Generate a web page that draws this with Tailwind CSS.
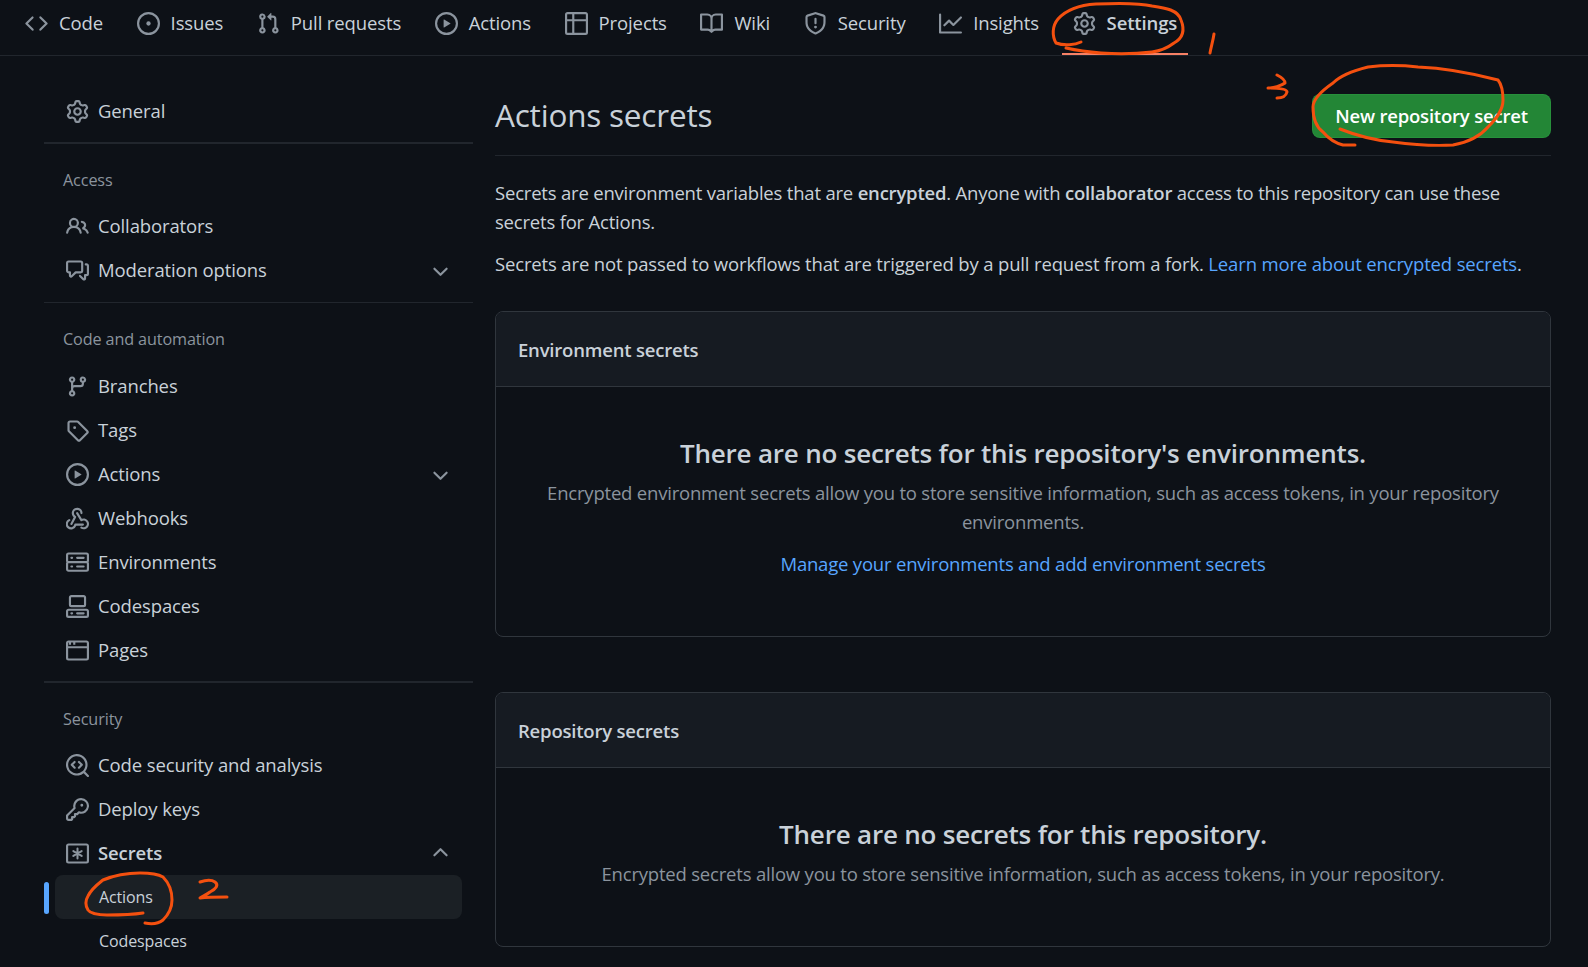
<!DOCTYPE html>
<html lang="en">
<head>
  <meta charset="UTF-8">
  <title>Actions secrets</title>
  <script src="https://cdn.jsdelivr.net/npm/@tailwindcss/browser@4"></script>
</head>
<body class="relative w-[1588px] h-[967px] overflow-hidden bg-[#0d1117] text-[#c9d1d9] text-[18.5px] tracking-[-0.12px] font-['Open_Sans',sans-serif]">

  <!-- icons -->
  <svg class="hidden">
    <symbol id="code" viewBox="0 0 16 16"><path d="M4.72 3.22a.75.75 0 011.06 1.06L2.06 8l3.72 3.72a.75.75 0 11-1.06 1.06L.47 8.53a.75.75 0 010-1.06l4.25-4.25zm6.56 0a.75.75 0 10-1.06 1.06L13.94 8l-3.72 3.72a.75.75 0 101.06 1.06l4.25-4.25a.75.75 0 000-1.06l-4.25-4.25z"/></symbol>
    <symbol id="issue" viewBox="0 0 16 16"><path d="M8 9.5a1.5 1.5 0 100-3 1.5 1.5 0 000 3z"/><path fill-rule="evenodd" d="M8 0a8 8 0 100 16A8 8 0 008 0zM1.5 8a6.5 6.5 0 1113 0 6.5 6.5 0 01-13 0z"/></symbol>
    <symbol id="pull" viewBox="0 0 16 16"><path fill-rule="evenodd" d="M7.177 3.073L9.573.677A.25.25 0 0110 .854v4.792a.25.25 0 01-.427.177L7.177 3.427a.25.25 0 010-.354zM3.75 2.5a.75.75 0 100 1.5.75.75 0 000-1.5zm-2.25.75a2.25 2.25 0 113 2.122v5.256a2.251 2.251 0 11-1.5 0V5.372A2.25 2.25 0 011.5 3.25zM11 2.5h-1V4h1a1 1 0 011 1v5.628a2.251 2.251 0 101.5 0V5A2.5 2.5 0 0011 2.5zm1 10.25a.75.75 0 111.5 0 .75.75 0 01-1.5 0zM3.75 12a.75.75 0 100 1.5.75.75 0 000-1.5z"/></symbol>
    <symbol id="play" viewBox="0 0 16 16"><path fill-rule="evenodd" d="M1.5 8a6.5 6.5 0 1113 0 6.5 6.5 0 01-13 0zM8 0a8 8 0 100 16A8 8 0 008 0zM6.379 5.227A.25.25 0 006 5.442v5.117a.25.25 0 00.379.214l4.264-2.559a.25.25 0 000-.428L6.379 5.227z"/></symbol>
    <symbol id="table" viewBox="0 0 16 16"><path fill-rule="evenodd" d="M0 1.75C0 .784.784 0 1.75 0h12.5C15.216 0 16 .784 16 1.75v12.5A1.75 1.75 0 0114.25 16H1.75A1.75 1.75 0 010 14.25V1.75zM1.5 6.5v7.75c0 .138.112.25.25.25H5v-8H1.5zM5 5H1.5V1.75a.25.25 0 01.25-.25H5V5zm1.5 1.5v8h7.75a.25.25 0 00.25-.25V6.5h-8zm8-1.5h-8V1.5h7.75a.25.25 0 01.25.25V5z"/></symbol>
    <symbol id="book" viewBox="0 0 16 16"><path fill-rule="evenodd" d="M0 1.75A.75.75 0 01.75 1h4.253c1.227 0 2.317.59 3 1.501A3.744 3.744 0 0111.006 1h4.245a.75.75 0 01.75.75v10.5a.75.75 0 01-.75.75h-4.507a2.25 2.25 0 00-1.591.659l-.622.621a.75.75 0 01-1.06 0l-.622-.621A2.25 2.25 0 005.258 13H.75a.75.75 0 01-.75-.75V1.75zm8.755 3a2.25 2.25 0 012.25-2.25H14.5v9h-3.757c-.71 0-1.4.201-1.992.572l.004-7.322zm-1.504 7.324l.004-5.073-.002-2.253A2.25 2.25 0 005.003 2.5H1.5v9h3.757a3.75 3.75 0 011.994.574z"/></symbol>
    <symbol id="shield" viewBox="0 0 16 16"><path fill-rule="evenodd" d="M7.467.133a1.75 1.75 0 011.066 0l5.25 1.68A1.75 1.75 0 0115 3.48V7c0 1.566-.32 3.182-1.303 4.682-.983 1.498-2.585 2.813-5.032 3.855a1.7 1.7 0 01-1.33 0c-2.447-1.042-4.049-2.357-5.032-3.855C1.32 10.182 1 8.566 1 7V3.48a1.75 1.75 0 011.217-1.667l5.25-1.68zm.61 1.429a.25.25 0 00-.153 0l-5.25 1.68a.25.25 0 00-.174.238V7c0 1.358.275 2.666 1.057 3.86.784 1.194 2.121 2.34 4.366 3.297a.2.2 0 00.154 0c2.245-.956 3.582-2.104 4.366-3.298C13.225 9.666 13.5 8.36 13.5 7V3.48a.25.25 0 00-.174-.237l-5.25-1.68zM9 10.5a1 1 0 11-2 0 1 1 0 012 0zm-.25-5.75a.75.75 0 10-1.5 0v3a.75.75 0 001.5 0v-3z"/></symbol>
    <symbol id="graph" viewBox="0 0 16 16"><path fill-rule="evenodd" d="M1.5 1.75a.75.75 0 00-1.5 0v12.5c0 .414.336.75.75.75h14.5a.75.75 0 000-1.5H1.5V1.75zm14.28 2.53a.75.75 0 00-1.06-1.06L10 7.94 7.53 5.47a.75.75 0 00-1.06 0L3.22 8.72a.75.75 0 001.06 1.06L7 7.06l2.47 2.47a.75.75 0 001.06 0l5.25-5.25z"/></symbol>
    <symbol id="gear" viewBox="0 0 16 16"><path fill-rule="evenodd" d="M7.429 1.525a6.593 6.593 0 011.142 0c.036.003.108.036.137.146l.289 1.105c.147.56.55.967.997 1.189.174.086.341.183.501.29.417.278.97.423 1.53.27l1.102-.303c.11-.03.175.016.195.046.219.31.41.641.573.989.014.031.022.11-.059.19l-.815.806c-.411.406-.562.957-.53 1.456a4.588 4.588 0 010 .582c-.032.499.119 1.05.53 1.456l.815.806c.08.08.073.159.059.19a6.494 6.494 0 01-.573.99c-.02.029-.086.074-.195.045l-1.103-.303c-.559-.153-1.112-.008-1.529.27-.16.107-.327.204-.5.29-.449.222-.851.628-.998 1.189l-.289 1.105c-.029.11-.101.143-.137.146a6.613 6.613 0 01-1.142 0c-.036-.003-.108-.037-.137-.146l-.289-1.105c-.147-.56-.55-.967-.997-1.189a4.502 4.502 0 01-.501-.29c-.417-.278-.97-.423-1.53-.27l-1.102.303c-.11.03-.175-.016-.195-.046a6.492 6.492 0 01-.573-.989c-.014-.031-.022-.11.059-.19l.815-.806c.411-.406.562-.957.53-1.456a4.587 4.587 0 010-.582c.032-.499-.119-1.05-.53-1.456l-.815-.806c-.08-.08-.073-.159-.059-.19a6.44 6.44 0 01.573-.99c.02-.029.086-.075.195-.045l1.103.303c.559.153 1.112.008 1.529-.27.16-.107.327-.204.5-.29.449-.222.851-.628.998-1.189l.289-1.105c.029-.11.101-.143.137-.146zM8 0c-.236 0-.47.01-.701.03-.743.065-1.29.615-1.458 1.261l-.29 1.106c-.017.066-.078.158-.211.224a5.994 5.994 0 00-.668.386c-.123.082-.233.09-.3.071L3.27 2.776c-.644-.177-1.392.02-1.82.63a7.977 7.977 0 00-.704 1.217c-.315.675-.111 1.422.363 1.891l.815.806c.05.048.098.147.088.294a6.084 6.084 0 000 .772c.01.147-.038.246-.088.294l-.815.806c-.474.469-.678 1.216-.363 1.891.2.428.436.835.704 1.218.428.609 1.176.806 1.82.63l1.103-.303c.066-.019.176-.011.299.071.213.143.436.272.668.386.133.066.194.158.212.224l.289 1.106c.169.646.715 1.196 1.458 1.26a8.094 8.094 0 001.402 0c.743-.064 1.29-.614 1.458-1.26l.29-1.106c.017-.066.078-.158.211-.224a5.98 5.98 0 00.668-.386c.123-.082.233-.09.3-.071l1.102.302c.644.177 1.392-.02 1.82-.63.268-.382.505-.789.704-1.217.315-.675.111-1.422-.364-1.891l-.814-.806c-.05-.048-.098-.147-.088-.294a6.1 6.1 0 000-.772c-.01-.147.039-.246.088-.294l.814-.806c.475-.469.679-1.216.364-1.891a7.992 7.992 0 00-.704-1.218c-.428-.609-1.176-.806-1.82-.63l-1.103.303c-.066.019-.176.011-.299-.071a5.991 5.991 0 00-.668-.386c-.133-.066-.194-.158-.212-.224L10.16 1.29C9.99.645 9.444.095 8.701.031A8.094 8.094 0 008 0zm1.5 8a1.5 1.5 0 11-3 0 1.5 1.5 0 013 0zM11 8a3 3 0 11-6 0 3 3 0 016 0z"/></symbol>
    <symbol id="people" viewBox="0 0 16 16"><path fill-rule="evenodd" d="M5.5 3.5a2 2 0 100 4 2 2 0 000-4zM2 5.5a3.5 3.5 0 115.898 2.549 5.507 5.507 0 013.034 4.084.75.75 0 11-1.482.235 4.001 4.001 0 00-7.9 0 .75.75 0 01-1.482-.236A5.507 5.507 0 013.102 8.05 3.49 3.49 0 012 5.5zM11 4a.75.75 0 100 1.5 1.5 1.5 0 01.666 2.844.75.75 0 00-.416.672v.352a.75.75 0 00.574.73c1.2.289 2.162 1.2 2.522 2.372a.75.75 0 101.434-.44 5.01 5.01 0 00-2.56-3.012A3 3 0 0011 4z"/></symbol>
    <symbol id="discussion" viewBox="0 0 16 16"><path fill-rule="evenodd" d="M1.5 2.75a.25.25 0 01.25-.25h8.5a.25.25 0 01.25.25v5.5a.25.25 0 01-.25.25h-3.5a.75.75 0 00-.53.22L3.5 11.44V9.25a.75.75 0 00-.75-.75h-1a.25.25 0 01-.25-.25v-5.5zM1.75 1A1.75 1.75 0 000 2.75v5.5C0 9.216.784 10 1.75 10H2v1.543a1.457 1.457 0 002.487 1.03L7.061 10h3.189A1.75 1.75 0 0012 8.25v-5.5A1.75 1.75 0 0010.25 1h-8.5zM14.5 4.75a.25.25 0 00-.25-.25h-.5a.75.75 0 110-1.5h.5c.966 0 1.75.784 1.75 1.75v5.5A1.75 1.75 0 0114.25 12H14v1.543a1.457 1.457 0 01-2.487 1.03L9.22 12.28a.75.75 0 111.06-1.06l2.22 2.22v-2.19a.75.75 0 01.75-.75h1a.25.25 0 00.25-.25v-5.5z"/></symbol>
    <symbol id="branch" viewBox="0 0 16 16"><path fill-rule="evenodd" d="M11.75 2.5a.75.75 0 100 1.5.75.75 0 000-1.5zm-2.25.75a2.25 2.25 0 113 2.122V6A2.5 2.5 0 0110 8.5H6a1 1 0 00-1 1v1.128a2.251 2.251 0 11-1.5 0V5.372a2.25 2.25 0 111.5 0v1.836A2.492 2.492 0 016 7h4a1 1 0 001-1v-.628A2.25 2.25 0 019.5 3.25zM4.25 12a.75.75 0 100 1.5.75.75 0 000-1.5zM3.5 3.25a.75.75 0 111.5 0 .75.75 0 01-1.5 0z"/></symbol>
    <symbol id="tag" viewBox="0 0 16 16"><path fill-rule="evenodd" d="M2.5 7.775V2.75a.25.25 0 01.25-.25h5.025a.25.25 0 01.177.073l6.25 6.25a.25.25 0 010 .354l-5.025 5.025a.25.25 0 01-.354 0l-6.25-6.25a.25.25 0 01-.073-.177zm-1.5 0V2.75C1 1.784 1.784 1 2.75 1h5.025c.464 0 .91.184 1.238.513l6.25 6.25a1.75 1.75 0 010 2.474l-5.026 5.026a1.75 1.75 0 01-2.474 0l-6.25-6.25A1.75 1.75 0 011 7.775zM6 5a1 1 0 100 2 1 1 0 000-2z"/></symbol>
    <symbol id="webhook" viewBox="0 0 16 16"><path d="M5.5 4.25a2.25 2.25 0 014.5 0 .75.75 0 001.5 0 3.75 3.75 0 10-6.14 2.889l-2.272 4.258a.75.75 0 001.324.706L7 7.25a.75.75 0 00-.309-1.015A2.25 2.25 0 015.5 4.25z"/><path d="M7.364 3.607a.75.75 0 011.03.257l2.608 4.349a3.75 3.75 0 11-.628 6.785.75.75 0 01.752-1.299 2.25 2.25 0 10-.033-3.88.75.75 0 01-1.03-.256L7.107 4.636a.75.75 0 01.257-1.03z"/><path d="M2.9 8.776A.75.75 0 012.625 9.8 2.25 2.25 0 105.75 12.25a.75.75 0 01.75-.75h5.25a.75.75 0 010 1.5H7.125A3.751 3.751 0 111.875 8.5a.75.75 0 011.025.276z"/></symbol>
    <symbol id="server" viewBox="0 0 16 16"><path fill-rule="evenodd" d="M1.75 1A1.75 1.75 0 000 2.75v4c0 .372.116.717.314 1a1.742 1.742 0 00-.314 1v4c0 .966.784 1.75 1.75 1.75h12.5A1.75 1.75 0 0016 12.75v-4c0-.372-.116-.717-.314-1 .198-.283.314-.628.314-1v-4A1.75 1.75 0 0014.25 1H1.75zm0 7.5a.25.25 0 00-.25.25v4c0 .138.112.25.25.25h12.5a.25.25 0 00.25-.25v-4a.25.25 0 00-.25-.25H1.75zM1.5 2.75a.25.25 0 01.25-.25h12.5a.25.25 0 01.25.25v4a.25.25 0 01-.25.25H1.75a.25.25 0 01-.25-.25v-4zm5.5 2A.75.75 0 017.75 4h4.5a.75.75 0 010 1.5h-4.5A.75.75 0 017 4.75zM7.75 10a.75.75 0 000 1.5h4.5a.75.75 0 000-1.5h-4.5zM3 4.75A.75.75 0 013.75 4h.5a.75.75 0 010 1.5h-.5A.75.75 0 013 4.75zM3.75 10a.75.75 0 000 1.5h.5a.75.75 0 000-1.5h-.5z"/></symbol>
    <symbol id="codespaces" viewBox="0 0 16 16"><path fill-rule="evenodd" d="M2 1.75C2 .784 2.784 0 3.75 0h8.5C13.216 0 14 .784 14 1.75v5a1.75 1.75 0 01-1.75 1.75h-8.5A1.75 1.75 0 012 6.75v-5zm1.75-.25a.25.25 0 00-.25.25v5c0 .138.112.25.25.25h8.5a.25.25 0 00.25-.25v-5a.25.25 0 00-.25-.25h-8.5zM0 11.25c0-.966.784-1.75 1.75-1.75h12.5c.966 0 1.75.784 1.75 1.75v3A1.75 1.75 0 0114.25 16H1.75A1.75 1.75 0 010 14.25v-3zM1.75 11a.25.25 0 00-.25.25v3c0 .138.112.25.25.25h12.5a.25.25 0 00.25-.25v-3a.25.25 0 00-.25-.25H1.75zM7 12.75a.75.75 0 01.75-.75h4.5a.75.75 0 010 1.5h-4.5a.75.75 0 01-.75-.75zm-4 0a.75.75 0 01.75-.75h.5a.75.75 0 010 1.5h-.5a.75.75 0 01-.75-.75z"/></symbol>
    <symbol id="browser" viewBox="0 0 16 16"><path fill-rule="evenodd" d="M0 2.75C0 1.784.784 1 1.75 1h12.5c.966 0 1.75.784 1.75 1.75v10.5A1.75 1.75 0 0114.25 15H1.75A1.75 1.75 0 010 13.25V2.75zM1.5 6.5v6.75c0 .138.112.25.25.25h12.5a.25.25 0 00.25-.25V6.5h-13zM1.5 5h13V2.75a.25.25 0 00-.25-.25H6.5V4H5V2.5H3.5V4H2V2.5h-.25a.25.25 0 00-.25.25V5z"/></symbol>
    <symbol id="codescan" viewBox="0 0 16 16"><path d="M8.47 4.97a.75.75 0 000 1.06L9.94 7.5 8.47 8.97a.75.75 0 101.06 1.06l2-2a.75.75 0 000-1.06l-2-2a.75.75 0 00-1.06 0zM6.53 6.03a.75.75 0 00-1.06-1.06l-2 2a.75.75 0 000 1.06l2 2a.75.75 0 101.06-1.06L5.06 7.5l1.47-1.47z"/><path fill-rule="evenodd" d="M12.246 13.307a7.5 7.5 0 111.06-1.06l2.474 2.473a.75.75 0 11-1.06 1.06l-2.474-2.473zM1.5 7.5a6 6 0 1110.386 4.094.75.75 0 00-.292.293A6 6 0 011.5 7.5z"/></symbol>
    <symbol id="key" viewBox="0 0 16 16"><path fill-rule="evenodd" d="M6.5 5.5a4 4 0 112.731 3.795.75.75 0 00-.768.18L7.44 10.5H6.25a.75.75 0 00-.75.75v1.19l-.06.06H4.25a.75.75 0 00-.75.75v1.19l-.06.06H1.75a.25.25 0 01-.25-.25v-1.69l5.024-5.023a.75.75 0 00.181-.768A3.995 3.995 0 016.5 5.5zm4-5.5a5.5 5.5 0 00-5.348 6.788L.22 11.72a.75.75 0 00-.22.53v2C0 15.216.784 16 1.75 16h2a.75.75 0 00.53-.22l.5-.5a.75.75 0 00.22-.53V14h.75a.75.75 0 00.53-.22l.5-.5a.75.75 0 00.22-.53V12h.75a.75.75 0 00.53-.22l.932-.932A5.5 5.5 0 1010.5 0zm.5 6a1 1 0 100-2 1 1 0 000 2z"/></symbol>
    <symbol id="asterisk" viewBox="0 0 16 16"><path fill-rule="evenodd" d="M0 2.75C0 1.784.784 1 1.75 1h12.5c.966 0 1.75.784 1.75 1.75v10.5A1.75 1.75 0 0114.25 15H1.75A1.75 1.75 0 010 13.25V2.75zM1.75 2.5a.25.25 0 00-.25.25v10.5c0 .138.112.25.25.25h12.5a.25.25 0 00.25-.25V2.75a.25.25 0 00-.25-.25H1.75z"/><path d="M8 4.6v6.8M5.1 6.3l5.8 3.4M10.9 6.3l-5.8 3.4" fill="none" stroke="currentColor" stroke-width="1.4" stroke-linecap="round"/></symbol>
    <symbol id="chevron" viewBox="0 0 16 16"><path fill-rule="evenodd" d="M12.78 6.22a.75.75 0 010 1.06l-4.25 4.25a.75.75 0 01-1.06 0L3.22 7.28a.75.75 0 011.06-1.06L8 9.94l3.72-3.72a.75.75 0 011.06 0z"/></symbol>
  </svg>

  <!-- repo tabs -->
  <nav class="flex h-[56px] items-start gap-[11.6px] border-b border-[#21262d] pl-[14px]">
    <a class="flex h-[46px] items-center gap-[11px] px-[11px]"><svg class="size-[23px] fill-current text-[#8b949e]"><use href="#code"/></svg>Code</a>
    <a class="flex h-[46px] items-center gap-[11px] px-[11px]"><svg class="size-[23px] fill-current text-[#8b949e]"><use href="#issue"/></svg>Issues</a>
    <a class="flex h-[46px] items-center gap-[11px] px-[11px]"><svg class="size-[23px] fill-current text-[#8b949e]"><use href="#pull"/></svg>Pull requests</a>
    <a class="flex h-[46px] items-center gap-[11px] px-[11px]"><svg class="size-[23px] fill-current text-[#8b949e]"><use href="#play"/></svg>Actions</a>
    <a class="flex h-[46px] items-center gap-[11px] px-[11px]"><svg class="size-[23px] fill-current text-[#8b949e]"><use href="#table"/></svg>Projects</a>
    <a class="flex h-[46px] items-center gap-[11px] px-[11px]"><svg class="size-[23px] fill-current text-[#8b949e]"><use href="#book"/></svg>Wiki</a>
    <a class="flex h-[46px] items-center gap-[11px] px-[11px]"><svg class="size-[23px] fill-current text-[#8b949e]"><use href="#shield"/></svg>Security</a>
    <a class="flex h-[46px] items-center gap-[11px] px-[11px]"><svg class="size-[23px] fill-current text-[#8b949e]"><use href="#graph"/></svg>Insights</a>
    <a class="relative flex h-[46px] items-center gap-[11px] px-[11px] font-semibold after:absolute after:left-0 after:right-0 after:top-[53px] after:h-[2px] after:bg-[#f78166]"><svg class="size-[23px] fill-current text-[#8b949e]"><use href="#gear"/></svg>Settings</a>
  </nav>

  <div class="flex pl-[44px] pr-[37px]">
    <!-- sidebar -->
    <aside class="w-[429px] shrink-0 pt-[33px]">
      <a class="flex h-[44px] items-center gap-[9px] pl-[22px]"><svg class="size-[23px] fill-current text-[#8b949e]"><use href="#gear"/></svg>General</a>

      <div class="mt-[9px] border-t-2 border-[#21262d]"></div>
      <h3 class="mt-[14px] flex h-[44px] items-center pl-[19px] text-[16.2px] font-medium text-[#8b949e]">Access</h3>
      <a class="mt-[2px] flex h-[44px] items-center gap-[9px] pl-[22px]"><svg class="size-[23px] fill-current text-[#8b949e]"><use href="#people"/></svg>Collaborators</a>
      <a class="flex h-[44px] items-center gap-[9px] pl-[22px]"><svg class="size-[23px] fill-current text-[#8b949e]"><use href="#discussion"/></svg>Moderation options<svg class="ml-auto mr-[21px] size-[23px] fill-current text-[#8b949e]"><use href="#chevron"/></svg></a>

      <div class="mt-[10px] border-t border-[#21262d]"></div>
      <h3 class="mt-[14px] flex h-[44px] items-center pl-[19px] text-[16.2px] font-medium text-[#8b949e]">Code and automation</h3>
      <a class="mt-[3px] flex h-[44px] items-center gap-[9px] pl-[22px]"><svg class="size-[23px] fill-current text-[#8b949e]"><use href="#branch"/></svg>Branches</a>
      <a class="flex h-[44px] items-center gap-[9px] pl-[22px]"><svg class="size-[23px] fill-current text-[#8b949e]"><use href="#tag"/></svg>Tags</a>
      <a class="flex h-[44px] items-center gap-[9px] pl-[22px]"><svg class="size-[23px] fill-current text-[#8b949e]"><use href="#play"/></svg>Actions<svg class="ml-auto mr-[21px] size-[23px] fill-current text-[#8b949e]"><use href="#chevron"/></svg></a>
      <a class="flex h-[44px] items-center gap-[9px] pl-[22px]"><svg class="size-[23px] fill-current text-[#8b949e]"><use href="#webhook"/></svg>Webhooks</a>
      <a class="flex h-[44px] items-center gap-[9px] pl-[22px]"><svg class="size-[23px] fill-current text-[#8b949e]"><use href="#server"/></svg>Environments</a>
      <a class="flex h-[44px] items-center gap-[9px] pl-[22px]"><svg class="size-[23px] fill-current text-[#8b949e]"><use href="#codespaces"/></svg>Codespaces</a>
      <a class="flex h-[44px] items-center gap-[9px] pl-[22px]"><svg class="size-[23px] fill-current text-[#8b949e]"><use href="#browser"/></svg>Pages</a>

      <div class="mt-[9px] border-t-2 border-[#21262d]"></div>
      <h3 class="mt-[14px] flex h-[44px] items-center pl-[19px] text-[16.2px] font-medium text-[#8b949e]">Security</h3>
      <a class="mt-[2px] flex h-[44px] items-center gap-[9px] pl-[22px]"><svg class="size-[23px] fill-current text-[#8b949e]"><use href="#codescan"/></svg>Code security and analysis</a>
      <a class="flex h-[44px] items-center gap-[9px] pl-[22px]"><svg class="size-[23px] fill-current text-[#8b949e]"><use href="#key"/></svg>Deploy keys</a>
      <a class="flex h-[44px] items-center gap-[9px] pl-[22px] font-semibold"><svg class="size-[23px] fill-current text-[#8b949e]"><use href="#asterisk"/></svg>Secrets<svg class="ml-auto mr-[21px] size-[23px] rotate-180 fill-current text-[#8b949e]"><use href="#chevron"/></svg></a>
      <div class="relative ml-[11px] mr-[11px] flex h-[44px] items-center rounded-lg bg-[#1b2025] pl-[44px] text-[16px]">
        <span class="absolute left-[-11px] top-[7px] h-[32px] w-[5px] rounded-full bg-[#58a6ff]"></span>
        Actions
      </div>
      <a class="flex h-[44px] items-center pl-[55px] text-[16px]">Codespaces</a>
    </aside>

    <!-- main -->
    <main class="ml-[22px] min-w-0 flex-1 pt-[38px] tracking-[-0.2px]">
      <div class="flex h-[62px] items-start justify-between border-b border-[#21262d]">
        <h2 class="text-[31.5px] font-normal leading-[42px] text-[#c9d1d9]">Actions secrets</h2>
        <button class="flex h-[44px] w-[239px] items-center justify-center rounded-lg border border-[#2ea043]/40 bg-[#238636] font-semibold text-white">New repository secret</button>
      </div>

      <p class="mt-[22px] leading-[29px]">Secrets are environment variables that are <b class="font-semibold">encrypted</b>. Anyone with <b class="font-semibold">collaborator</b> access to this repository can use these<br>secrets for Actions.</p>
      <p class="mt-[13px] leading-[29px] tracking-[-0.15px]">Secrets are not passed to workflows that are triggered by a pull request from a fork. <a class="text-[#58a6ff]">Learn more about encrypted secrets</a>.</p>

      <section class="mt-[33px] overflow-hidden rounded-lg border border-[#30363d]">
        <h3 class="flex h-[75px] items-center border-b border-[#30363d] bg-[#161b22] pl-[22px] pt-[2px] font-semibold">Environment secrets</h3>
        <div class="pb-[58px] pt-[46px] text-center">
          <h4 class="text-[26px] font-semibold leading-[40px]">There are no secrets for this repository's environments.</h4>
          <p class="mt-[5px] leading-[29px] text-[#8b949e]">Encrypted environment secrets allow you to store sensitive information, such as access tokens, in your repository<br>environments.</p>
          <a class="mt-[13px] block leading-[29px] text-[#58a6ff]">Manage your environments and add environment secrets</a>
        </div>
      </section>

      <section class="mt-[55px] overflow-hidden rounded-lg border border-[#30363d]">
        <h3 class="flex h-[75px] items-center border-b border-[#30363d] bg-[#161b22] pl-[22px] pt-[2px] font-semibold">Repository secrets</h3>
        <div class="pb-[58px] pt-[46px] text-center">
          <h4 class="text-[26px] font-semibold leading-[40px]">There are no secrets for this repository.</h4>
          <p class="mt-[5px] leading-[29px] text-[#8b949e]">Encrypted secrets allow you to store sensitive information, such as access tokens, in your repository.</p>
        </div>
      </section>
    </main>
  </div>

  <!-- hand drawn marks on top of the screenshot -->
  <svg class="pointer-events-none absolute left-0 top-0 h-[967px] w-[1588px]" viewBox="0 0 1588 967" fill="none" stroke="#f4500f" stroke-width="3" stroke-linecap="round" stroke-linejoin="round">
    <path d="M1081 42C1075 45 1064 46 1056 43C1052 36 1052 26 1058 19C1066 10 1080 5 1096 4C1120 3 1140 3 1152 6C1166 8 1178 10 1181 20C1185 30 1183 38 1174 43C1166 49 1160 51 1152 52C1135 54 1115 54 1101 53C1088 52 1075 50 1066 48"/>
    <path d="M1214 34C1213 41 1211 47 1210 53"/>
    <path d="M1277 75C1281 77 1285 80 1285 83C1281 86 1273 88 1268 88C1274 88 1287 88 1287 92C1286 96 1282 98 1277 98"/>
    <path d="M1340 129C1355 135 1372 140 1393 142C1415 145 1435 146 1453 145C1470 142 1482 134 1488 127C1497 118 1503 110 1503 100C1503 92 1502 85 1498 80C1475 74 1445 68 1418 67C1400 65 1385 65 1368 67C1352 71 1340 76 1333 83C1320 92 1313 100 1313 107C1313 118 1316 127 1323 132C1328 138 1335 143 1343 145L1355 145"/>
    <path d="M200 882C206 880 212 880 215 882C219 885 216 889 210 892C206 895 203 896 200 898C208 897 218 897 227 897"/>
    <path d="M143 913C130 915 118 915 107 915C98 915 90 913 88 910C85 905 85 901 88 896C92 888 98 884 103 880C115 875 128 873 140 873C150 873 158 874 163 877C170 884 172 892 172 900C172 908 168 915 163 920C158 924 150 924 145 923"/>
  </svg>
</body>
</html>
